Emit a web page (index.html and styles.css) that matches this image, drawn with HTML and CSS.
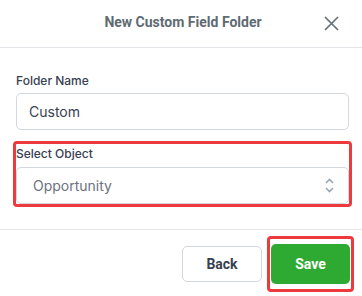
FILE: index.html
```html
<!DOCTYPE html>
<html lang="en">
<head>
    <meta charset="UTF-8">
    <meta name="viewport" content="width=device-width, initial-scale=1.0">
    <title>New Custom Field Folder</title>
    <link rel="stylesheet" href="styles.css">
</head>
<body>

    <div class="modal">
        <div class="modal-header">
            <span></span>
            <h3 class="modal-title">New Custom Field Folder</h3>
            <button class="close-btn" aria-label="Close">
                <svg width="15" height="15" viewBox="0 0 15 15">
                    <path d="M1 1 L14 14 M14 1 L1 14" stroke="#66727a" stroke-width="1.7" fill="none"/>
                </svg>
            </button>
        </div>

        <div class="modal-body">
            <div class="field">
                <label class="field-label">Folder Name</label>
                <input class="text-input" type="text" value="Custom">
            </div>

            <div class="field highlight">
                <label class="field-label">Select Object</label>
                <div class="select-box">
                    <span>Opportunity</span>
                    <svg width="9" height="15" viewBox="0 0 9 15">
                        <path d="M1 5 L4.5 1.5 L8 5 M1 10 L4.5 13.5 L8 10" stroke="#9aa5b4" stroke-width="1.6" fill="none"/>
                    </svg>
                </div>
            </div>
        </div>

        <div class="modal-footer">
            <button class="btn btn-back">Back</button>
            <div class="highlight-btn">
                <button class="btn btn-save">Save</button>
            </div>
        </div>
    </div>

</body>
</html>
```

FILE: styles.css
```css
body {
    margin: 0;
    background: #fff;
    font-family: Inter, "Noto Sans", sans-serif;
}
.modal {
    width: 362px;
}
.modal-header {
    display: grid;
    grid-template-columns: 40px 1fr 40px;
    align-items: center;
    height: 48px;
    box-sizing: border-box;
    border-bottom: 1px solid #e3e5e8;
    padding-left: 4px;
}
.modal-title {
    margin: 0 0 4px 0;
    text-align: center;
    font-family: Roboto, sans-serif;
    font-size: 14px;
    font-weight: 700;
    color: #5f6b73;
}
.close-btn {
    border: none;
    background: none;
    padding: 0;
    display: flex;
    justify-content: flex-start;
    margin-left: 2px;
}
.modal-body {
    padding: 25px 13px 22px 16px;
}
.field-label {
    display: block;
    font-size: 12px;
    line-height: 16px;
    font-weight: 500;
    color: #374151;
    margin-bottom: 4px;
}
.text-input {
    display: block;
    width: 100%;
    height: 37px;
    box-sizing: border-box;
    border: 1px solid #d3d7de;
    border-radius: 5px;
    padding: 0 12px;
    font-family: Inter, sans-serif;
    font-size: 14px;
    color: #374151;
    outline: none;
}
.highlight {
    margin: 11px -3px 0 -3px;
    border: 3px solid #ec3a3f;
    border-radius: 4px;
}
.highlight .field-label {
    margin: 2px 0 5px 0;
}
.select-box {
    display: flex;
    align-items: center;
    justify-content: space-between;
    height: 37px;
    box-sizing: border-box;
    border: 1px solid #d3d7de;
    border-radius: 5px;
    padding: 0 14px 0 16px;
    font-size: 14px;
    color: #6b7280;
}
.modal-footer {
    display: flex;
    justify-content: flex-end;
    align-items: center;
    gap: 5px;
    border-top: 1px solid #e3e5e8;
    padding: 6px 8px 0 0;
}
.btn {
    font-family: Roboto, sans-serif;
    font-size: 14px;
    font-weight: 700;
    border-radius: 5px;
    cursor: pointer;
}
.btn-back {
    width: 80px;
    height: 36px;
    background: #fff;
    border: 1px solid #d3d7de;
    color: #374151;
}
.highlight-btn {
    border: 3px solid #ec3a3f;
    border-radius: 4px;
    padding: 5px 1px;
}
.btn-save {
    display: block;
    width: 79px;
    height: 40px;
    background: #2eaa33;
    border: none;
    color: #fff;
}
```
